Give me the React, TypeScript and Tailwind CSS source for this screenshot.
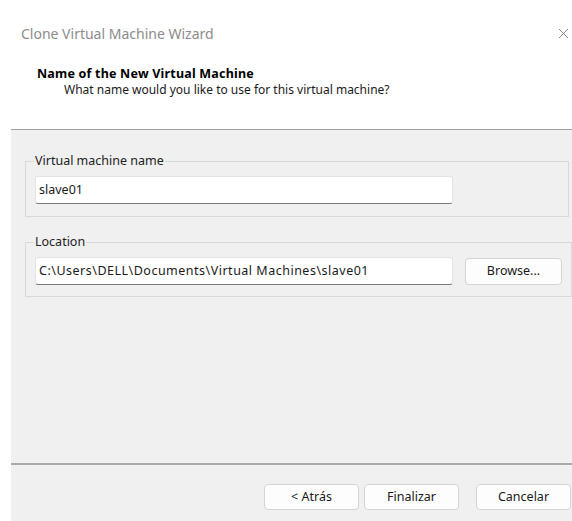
import React from "react";

const font = { fontFamily: '"Noto Sans", "Open Sans", sans-serif' };

function CloseIcon() {
  return (
    <svg width="11" height="11" viewBox="0 0 11 11" className="text-[#8a8a8a]">
      <path d="M1 1L10 10M10 1L1 10" stroke="currentColor" strokeWidth="1" fill="none" />
    </svg>
  );
}

function TextBox({ value, className = "" }: { value: string; className?: string }) {
  return (
    <div
      className={`h-[28px] bg-white border border-[#e3e3e3] border-b-[#7a7a7a] rounded-[3px] flex items-center px-[3px] text-[12.5px] text-[#1a1a1a] ${className}`}
    >
      {value}
    </div>
  );
}

function WizardButton({ label, className = "" }: { label: string; className?: string }) {
  return (
    <button className={`w-[95px] h-[26px] bg-[#fdfdfd] border border-[#d4d4d4] rounded-[4px] text-[12.5px] text-[#1a1a1a] ${className}`}>
      {label}
    </button>
  );
}

export default function App() {
  return (
    <div className="w-[572px] h-[521px] bg-white flex flex-col overflow-hidden" style={font}>
      {/* Header */}
      <div className="h-[129px] shrink-0 flex flex-col">
        <div className="flex items-center justify-between pl-[21px] pr-[3px] pt-[22px] h-[44px]">
          <span className="text-[14px] text-[#8c8c8c]">Clone Virtual Machine Wizard</span>
          <CloseIcon />
        </div>
        <div className="pl-[37px] pt-[22px] leading-[16px]">
          <div className="text-[12.5px] font-bold text-black tracking-[0.2px]">Name of the New Virtual Machine</div>
          <div className="pl-[27px] text-[12px] text-[#1a1a1a]">
            What name would you like to use for this virtual machine?
          </div>
        </div>
      </div>

      {/* Body */}
      <div className="flex-1 ml-[11px] bg-[#f0f0f0] border-t border-[#a0a0a0] flex flex-col">
        <div className="flex-1 pl-[14px] pr-[3px] pt-[23px] flex flex-col gap-[17px]">
          <fieldset className="border border-[#d9d9d9] px-[9px] pb-[12px]">
            <legend className="text-[12.5px] text-[#222] leading-[16px] px-[1px] ml-[-1px]">
              Virtual machine name
            </legend>
            <TextBox value="slave01" className="w-[418px] mt-[7px]" />
          </fieldset>

          <fieldset className="border border-[#d9d9d9] px-[9px] pb-[11px]">
            <legend className="text-[12.5px] text-[#222] leading-[16px] px-[1px] ml-[-1px]">Location</legend>
            <div className="flex items-center gap-[12px] mt-[7px]">
              <TextBox
                value="C:\Users\DELL\Documents\Virtual Machines\slave01"
                className="w-[418px] tracking-[0.5px]"
              />
              <button className="w-[97px] h-[27px] bg-[#fdfdfd] border border-[#d4d4d4] rounded-[4px] text-[12.5px] text-[#1a1a1a]">
                Browse...
              </button>
            </div>
          </fieldset>
        </div>

        {/* Footer */}
        <div className="h-[58px] shrink-0 border-t-2 border-[#a9a9a9] flex items-start justify-end pt-[19px] pr-[1px]">
          <WizardButton label="< Atrás" />
          <WizardButton label="Finalizar" className="ml-[5px]" />
          <WizardButton label="Cancelar" className="ml-[17px]" />
        </div>
      </div>
    </div>
  );
}
